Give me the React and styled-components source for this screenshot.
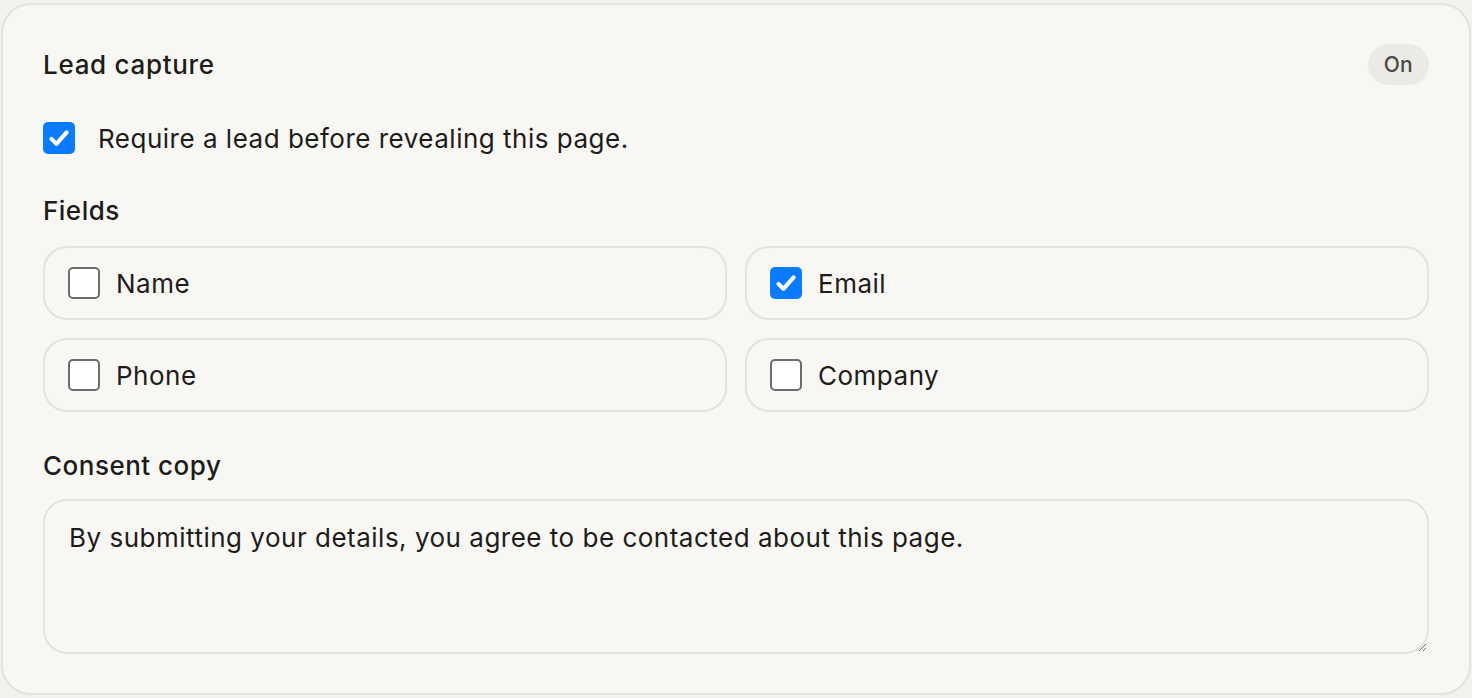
import styled, { createGlobalStyle } from 'styled-components'

const GlobalStyle = createGlobalStyle`
  html, body {
    margin: 0;
    padding: 0;
    background: #f3f2ef;
  }
  body {
    font-family: Inter, "Liberation Sans", sans-serif;
    color: #1d1c1a;
  }
  * { box-sizing: border-box; }
`

const Page = styled.div`
  padding: 3px 1px 3px 1px;
`

const Card = styled.section`
  background: #f8f7f4;
  border: 2px solid #e4e2de;
  border-radius: 30px;
  padding: 39px 40px 39px 40px;
  display: flex;
  flex-direction: column;
`

const Header = styled.div`
  display: flex;
  align-items: center;
  justify-content: space-between;
  height: 41px;
`

const Title = styled.h2`
  margin: 0;
  font-size: 26px;
  font-weight: 500;
  letter-spacing: 0.7px;
`

const Pill = styled.span`
  display: inline-flex;
  align-items: center;
  justify-content: center;
  height: 41px;
  padding: 0 16px;
  border-radius: 21px;
  background: #ebeae6;
  color: #4a4946;
  font-size: 21px;
  font-weight: 500;
  letter-spacing: 0.3px;
`

const CheckRow = styled.label`
  display: flex;
  align-items: center;
  gap: 23px;
  margin-top: 37px;
  font-size: 26px;
  letter-spacing: 0.5px;
  cursor: pointer;
`

const Box = styled.span`
  flex: none;
  width: 32px;
  height: 32px;
  border-radius: 5px;
  display: flex;
  align-items: center;
  justify-content: center;
  background: ${p => (p.$on ? '#0a7aff' : '#ffffff')};
  border: ${p => (p.$on ? 'none' : '2px solid #6e6d6b')};
`

const Label = styled.div`
  font-size: 26px;
  font-weight: 500;
  letter-spacing: 0.5px;
  line-height: 32px;
  margin-top: ${p => p.$mt}px;
`

const Grid = styled.div`
  display: grid;
  grid-template-columns: 1fr 1fr;
  gap: 18px;
  margin-top: 19px;
`

const Option = styled.label`
  display: flex;
  align-items: center;
  gap: 16px;
  height: 74px;
  padding: 0 23px;
  border: 2px solid #e4e2de;
  border-radius: 24px;
  font-size: 26px;
  letter-spacing: 0.5px;
  cursor: pointer;
`

const TextArea = styled.textarea`
  margin-top: 17px;
  width: 100%;
  height: 155px;
  border: 2px solid #e4e2de;
  border-radius: 24px;
  background: transparent;
  padding: 21px 24px;
  font-family: Inter, "Liberation Sans", sans-serif;
  font-size: 26px;
  letter-spacing: 0.5px;
  line-height: 32px;
  color: #1d1c1a;
  resize: vertical;
  outline: none;
`

function Check({ on }) {
  return (
    <Box $on={on}>
      {on && (
        <svg width="26" height="26" viewBox="0 0 24 24" fill="none">
          <path d="M5 12.8l4.6 4.6L19 6.8" stroke="#fff" strokeWidth="3.8" strokeLinecap="round" strokeLinejoin="round" />
        </svg>
      )}
    </Box>
  )
}

const fields = [
  { name: 'Name', on: false },
  { name: 'Email', on: true },
  { name: 'Phone', on: false },
  { name: 'Company', on: false },
]

export default function App() {
  return (
    <Page>
      <GlobalStyle />
      <Card>
        <Header>
          <Title>Lead capture</Title>
          <Pill>On</Pill>
        </Header>
        <CheckRow>
          <Check on />
          Require a lead before revealing this page.
        </CheckRow>
        <Label $mt={41}>Fields</Label>
        <Grid>
          {fields.map(f => (
            <Option key={f.name}>
              <Check on={f.on} />
              {f.name}
            </Option>
          ))}
        </Grid>
        <Label $mt={38}>Consent copy</Label>
        <TextArea defaultValue="By submitting your details, you agree to be contacted about this page." />
      </Card>
    </Page>
  )
}
